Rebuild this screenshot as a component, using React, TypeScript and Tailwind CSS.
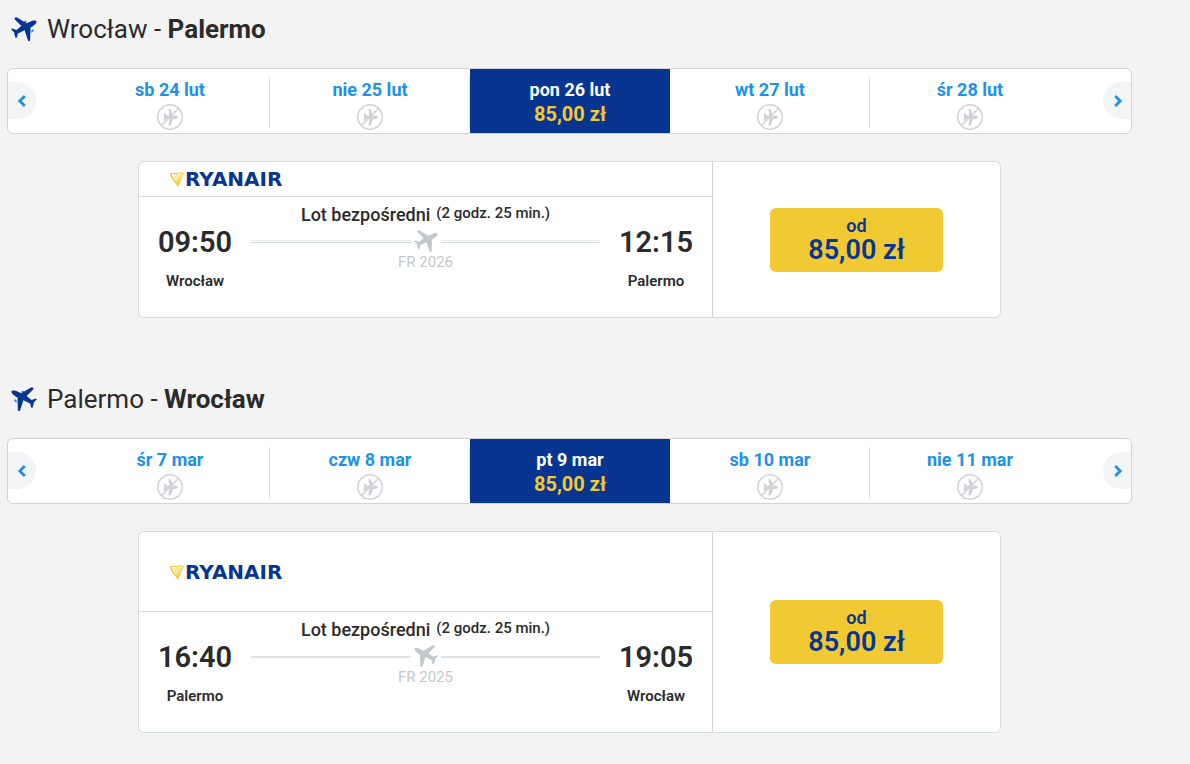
import clsx from 'clsx';

type Direction = 'outbound' | 'inbound';

interface Day {
  label: string;
  price?: string;
}

interface Flight {
  from: string;
  to: string;
  departure: string;
  arrival: string;
  duration: string;
  number: string;
  price: string;
}

const trips: { direction: Direction; days: Day[]; flight: Flight }[] = [
  {
    direction: 'outbound',
    days: [
      { label: 'sb 24 lut' },
      { label: 'nie 25 lut' },
      { label: 'pon 26 lut', price: '85,00 zł' },
      { label: 'wt 27 lut' },
      { label: 'śr 28 lut' },
    ],
    flight: {
      from: 'Wrocław',
      to: 'Palermo',
      departure: '09:50',
      arrival: '12:15',
      duration: '(2 godz. 25 min.)',
      number: 'FR 2026',
      price: '85,00 zł',
    },
  },
  {
    direction: 'inbound',
    days: [
      { label: 'śr 7 mar' },
      { label: 'czw 8 mar' },
      { label: 'pt 9 mar', price: '85,00 zł' },
      { label: 'sb 10 mar' },
      { label: 'nie 11 mar' },
    ],
    flight: {
      from: 'Palermo',
      to: 'Wrocław',
      departure: '16:40',
      arrival: '19:05',
      duration: '(2 godz. 25 min.)',
      number: 'FR 2025',
      price: '85,00 zł',
    },
  },
];

function Plane({ direction, engines, className }: { direction: Direction; engines?: boolean; className?: string }) {
  return (
    <svg viewBox="0 0 26 25" className={className} aria-hidden="true">
      <g transform={direction === 'inbound' ? 'translate(26 0) scale(-1 1)' : undefined}>
        {engines && (
          <path d="M12.5 4.2l2.5-.6.8 1.8-2.6 1zM20.2 13.6l1.9-1.6.9 1.7-2.6 2.4z" fill="#2a93ea" />
        )}
        <path
          fill="currentColor"
          d="M25.6 4.4C25.3 3.3 23 3.1 21.2 3.8L15.6 6.2 5.6.3 3.4 1.1 3.6 2.2 10.4 8.9 5.4 12.9 1.4 11.4.1 12.2 3.3 15.4 3.2 16.4 4.6 21 5.9 20.5 6.9 16.4 13.6 13.3 17 23.6 17.9 24.3 19.1 23.4 19.5 10.6C22 9.2 25.9 6.3 25.6 4.4Z"
        />
      </g>
    </svg>
  );
}

function NoFlight() {
  return (
    <svg viewBox="0 0 26 26" className="h-[26px] w-[26px]" role="img" aria-label="Brak lotów">
      <circle cx="13" cy="13" r="12.2" fill="none" stroke="#d0d4d8" strokeWidth="1.5" />
      <path
        fill="#cdd1d5"
        d="M21 13.2C21 12.3 19.2 11.5 17.4 11.5H16L13.4 5H11.4L12.4 11.4 9.6 11.8 8 9.6H6.6L7.4 13.2 6.6 16.8H8L9.6 14.6 12.4 15 11.4 21.4H13.4L16 14.9H17.4C19.2 14.9 21 14.1 21 13.2Z"
      />
      <path d="M5.1 22.3L22.3 5.1" stroke="#fff" strokeWidth=".6" />
      <path d="M4.3 21.7L21.7 4.3" stroke="#cdd1d5" strokeWidth="1.5" />
    </svg>
  );
}

function Logo() {
  return (
    <div className="flex items-center gap-px">
      <svg viewBox="0 0 14 14" className="h-[14px] w-[14px]" fill="none" stroke="#f1c933" strokeLinecap="round" aria-hidden="true">
        <path d="M1.4 1.5C.3 4.2 2.5 6 3.8 8L8 13.2" strokeWidth="1.7" />
        <path d="M1.5 1.7C4 .3 5.5 2.3 8 1.2S11.8.8 13 1.4L8.1 13" strokeWidth="1.1" />
        <path d="M4.4 3.5L8 12M6.6 2.8L8 11M8.8 2.6L8.1 11M10.8 2.2L8.2 11" strokeWidth=".7" />
      </svg>
      <span className="font-['DejaVu_Sans'] text-xl leading-5 font-bold text-[#073590]">RYANAIR</span>
    </div>
  );
}

function ArrowButton({ side }: { side: 'left' | 'right' }) {
  return (
    <button
      type="button"
      aria-label={side === 'left' ? 'Poprzednie dni' : 'Następne dni'}
      className={clsx(
        'absolute top-[13px] flex h-[37px] w-7 items-center justify-center bg-[#f3f4f6] text-[#2091eb]',
        side === 'left' ? 'left-0 rounded-r-full' : 'right-0 rounded-l-full',
      )}
    >
      <svg viewBox="0 0 10 12" className="h-3 w-[10px]" fill="none" stroke="currentColor" strokeWidth="2.8" aria-hidden="true">
        <path d={side === 'left' ? 'M7.8 1L2.8 6l5 5' : 'M3.2 1l5 5-5 5'} />
      </svg>
    </button>
  );
}

function DayStrip({ days }: { days: Day[] }) {
  return (
    <div className="relative overflow-hidden rounded-md border border-[#d0d4d8] bg-white pr-[61px] pl-[62px]">
      <ArrowButton side="left" />
      <div className="grid h-16 grid-cols-5">
        {days.map((day, i) => (
          <button
            key={day.label}
            type="button"
            className={clsx(
              'relative flex flex-col items-center pt-[11px] text-lg leading-5 font-bold',
              day.price ? 'bg-[#073590] text-white' : 'text-[#2091eb]',
            )}
          >
            {day.label}
            {day.price ? (
              <span className="mt-[3px] text-xl leading-[22px] text-[#f1c933]">{day.price}</span>
            ) : (
              <span className="mt-1">
                <NoFlight />
              </span>
            )}
            {!day.price && i < days.length - 1 && (
              <span className="absolute top-2 right-0 h-[51px] w-px bg-[#dcdfe2]" />
            )}
          </button>
        ))}
      </div>
      <ArrowButton side="right" />
    </div>
  );
}

function Stop({ time, city }: { time: string; city: string }) {
  return (
    <div className="pt-7 text-center">
      <div className="text-[29px] leading-[34px] font-semibold">{time}</div>
      <div className="mt-3 text-[15px] leading-5 font-semibold">{city}</div>
    </div>
  );
}

function FlightCard({ flight, direction }: { flight: Flight; direction: Direction }) {
  const line = clsx(
    'flex-1',
    direction === 'outbound' ? 'h-[3px] border-t border-b border-t-[#e8ebed] border-b-[#d0d5da]' : 'h-[2px] bg-[#dfe3e6]',
  );

  return (
    <article className="mx-auto mt-[27px] flex w-full max-w-[863px] rounded-md border border-[#d5dae1] bg-white">
      <div className="flex-1 border-r border-[#d0d4d8] pb-[26px]">
        <div
          className={clsx(
            'flex items-center border-b border-[#d5dae1] pl-[31px]',
            direction === 'outbound' ? 'h-[35px]' : 'h-20',
          )}
        >
          <Logo />
        </div>
        <div className="grid grid-cols-[112px_1fr_112px]">
          <Stop time={flight.departure} city={flight.from} />
          <div className="pt-2 text-center">
            <div className="flex justify-center gap-[6px] leading-5 font-medium">
              <span className="text-lg leading-5">Lot bezpośredni</span>
              <span className="text-[15px] leading-4">{flight.duration}</span>
            </div>
            <div className="mt-1 flex h-[25px] items-center gap-[3px]">
              <span className={line} />
              <Plane direction={direction} className="h-[23px] w-6 text-[#c3c8cd]" />
              <span className={line} />
            </div>
            <div className="text-[15px] leading-4 text-[#c3c8cd]">{flight.number}</div>
          </div>
          <Stop time={flight.arrival} city={flight.to} />
        </div>
      </div>
      <div className="flex w-1/3 items-center justify-center">
        <button type="button" className="flex h-16 w-[173px] flex-col items-center justify-center rounded-md bg-[#f1c933] font-semibold text-[#073590]">
          <span className="text-lg leading-5">od</span>
          <span className="text-[27px] leading-7">{flight.price}</span>
        </button>
      </div>
    </article>
  );
}

export default function App() {
  return (
    <main className="min-h-screen bg-[#f3f3f3] pt-[9px] pr-[58px] pb-7 pl-[7px] font-[Roboto,sans-serif] text-[#2b2b2b]">
      <div className="flex flex-col gap-[61px]">
        {trips.map(({ direction, days, flight }) => (
          <section key={direction}>
            <h2 className="mb-[19px] flex h-10 items-center pl-1 text-[26px] font-normal">
              <Plane direction={direction} engines className="mr-[10px] h-[25px] w-[26px] text-[#073590]" />
              <span>
                {flight.from} - <strong className="font-bold">{flight.to}</strong>
              </span>
            </h2>
            <DayStrip days={days} />
            <FlightCard flight={flight} direction={direction} />
          </section>
        ))}
      </div>
    </main>
  );
}
